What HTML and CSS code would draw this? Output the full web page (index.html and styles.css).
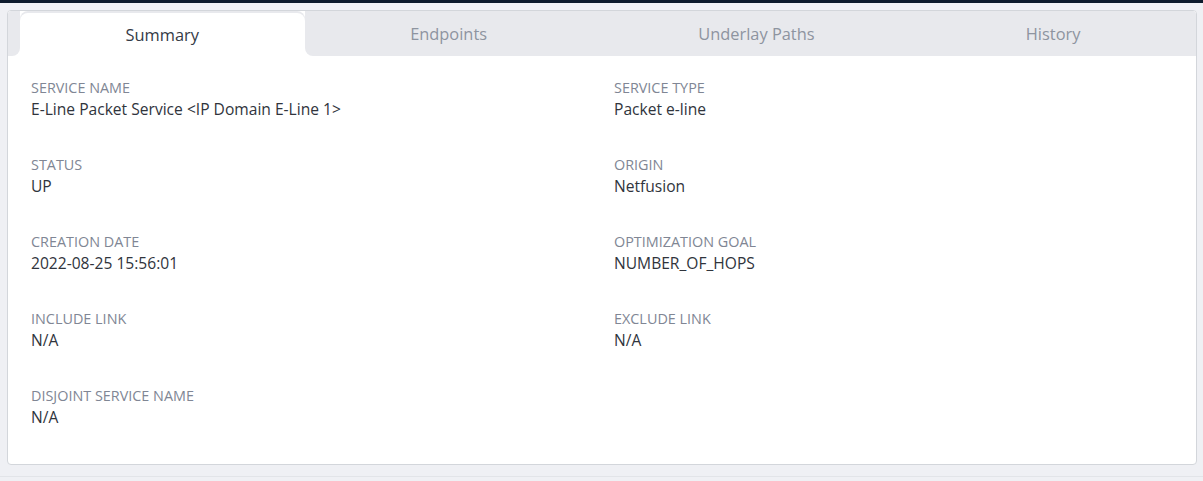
FILE: index.html
```html
<!DOCTYPE html>
<html>
<head>
<meta charset="utf-8">
<link rel="stylesheet" href="styles.css">
</head>
<body>
<div class="topbar"></div>
<div class="card">
  <div class="tabs">
    <div class="tab-pad before"></div>
    <div class="tab active">Summary</div>
    <div class="tab after">Endpoints</div>
    <div class="tab">Underlay Paths</div>
    <div class="tab">History</div>
    <div class="tab-pad end"></div>
  </div>
  <div class="fields">
    <div class="field"><div class="label">SERVICE NAME</div><div class="value">E-Line Packet Service &lt;IP Domain E-Line 1&gt;</div></div>
    <div class="field"><div class="label">SERVICE TYPE</div><div class="value">Packet e-line</div></div>
    <div class="field"><div class="label">STATUS</div><div class="value">UP</div></div>
    <div class="field"><div class="label">ORIGIN</div><div class="value">Netfusion</div></div>
    <div class="field"><div class="label">CREATION DATE</div><div class="value">2022-08-25 15:56:01</div></div>
    <div class="field"><div class="label">OPTIMIZATION GOAL</div><div class="value">NUMBER_OF_HOPS</div></div>
    <div class="field"><div class="label">INCLUDE LINK</div><div class="value">N/A</div></div>
    <div class="field"><div class="label">EXCLUDE LINK</div><div class="value">N/A</div></div>
    <div class="field"><div class="label">DISJOINT SERVICE NAME</div><div class="value">N/A</div></div>
  </div>
</div>
<div class="footer-line"></div>
</body>
</html>
```
FILE: styles.css
```css
html, body {
  margin: 0;
  padding: 0;
  background: #eff0f4;
  font-family: "Open Sans", "Liberation Sans", sans-serif;
}
.topbar {
  height: 3px;
  background: #0c1a2c;
}
.card {
  margin: 7px 6px 0 7px;
  background: #ffffff;
  border: 1px solid #d3d6db;
  border-radius: 4px;
  overflow: hidden;
  height: 455px;
  box-sizing: border-box;
}
.footer-line {
  margin-top: 11px;
  height: 1px;
  background: #e2e4e8;
}
.tabs {
  display: flex;
  background: #ffffff;
  height: 45px;
}
.tab-pad {
  background: #e8e9ed;
}
.tab-pad.before {
  width: 12px;
  border-bottom-right-radius: 8px;
}
.tab-pad.end {
  width: 10px;
}
.tab {
  flex: 1 1 auto;
  display: flex;
  align-items: center;
  justify-content: center;
  background: #e8e9ed;
  color: #8e94a0;
  font-size: 16.4px;
}
.tab.active {
  background: #ffffff;
  color: #343a46;
  border-radius: 8px 8px 0 0;
  box-shadow: 0 -2px 0 #e8e9ed;
  margin-top: 2px;
}
.tab.after {
  border-bottom-left-radius: 8px;
}
.fields {
  display: grid;
  grid-template-columns: 583px 1fr;
  padding: 22px 0 0 23px;
  row-gap: 35px;
}
.label {
  font-size: 14.4px;
  line-height: 20px;
  color: #808694;
}
.value {
  margin-top: 1px;
  font-size: 15.6px;
  line-height: 21px;
  color: #30343c;
}
```
